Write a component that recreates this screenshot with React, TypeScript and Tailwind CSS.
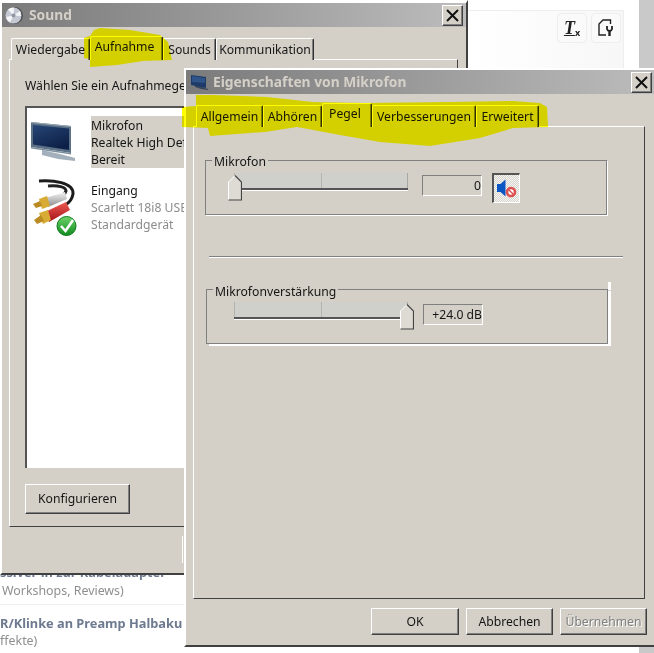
import type { ReactNode } from "react";

const raised = "border-t border-l border-t-white border-l-white border-r border-b border-r-[#404040] border-b-[#404040]";

function CloseButton() {
  return (
    <button type="button" className={`flex h-[21px] w-[21px] items-center justify-center bg-[#d4d0c8] shadow-[inset_-1px_-1px_0_#808080] ${raised}`}>
      <svg width="13" height="13" viewBox="0 0 13 13" fill="none" stroke="#111" strokeWidth="2">
        <path d="M1 1l11 11M12 1L1 12" />
      </svg>
    </button>
  );
}

function TitleBar({ title, icon, padRight }: { title: string; icon: ReactNode; padRight: string }) {
  return (
    <div className={`flex h-6 items-center bg-gradient-to-r from-[#7b7b7b] to-[#bcbcbc] pl-[3px] ${padRight}`}>
      <div className="flex w-[23px] shrink-0 items-center">{icon}</div>
      <span className="ml-[1px] text-[13.8px] font-bold text-[#d4d0c8]">{title}</span>
      <div className="ml-auto">
        <CloseButton />
      </div>
    </div>
  );
}

function Tab({ label, width, active }: { label: string; width: string; active?: boolean }) {
  return (
    <div
      className={`flex shrink-0 items-center justify-center rounded-t-[2px] border-t border-l border-t-white border-l-white border-r border-r-[#303030] bg-[#d4d0c8] shadow-[inset_-1px_0_0_#808080] ${width} ${
        active ? "relative z-10 h-[24px] pb-[3px] pr-[4px]" : "h-[22px] pt-[2px]"
      }`}
    >
      {label}
    </div>
  );
}

function SoundIcon() {
  return (
    <svg width="19" height="19" viewBox="0 0 19 19">
      <circle cx="9.5" cy="9.5" r="8.5" fill="#4d4f52" />
      <circle cx="8.5" cy="9.5" r="8" fill="#c3c8d2" />
      <path d="M8.5 9.5L3 3.5A8 8 0 0 1 9 1.5ZM8.5 9.5L1 11A8 8 0 0 0 5 16.5ZM8.5 9.5L15 5A8 8 0 0 1 16 10Z" fill="#f4f5f7" />
      <circle cx="8.5" cy="9.5" r="2" fill="#8f95a0" />
    </svg>
  );
}

function MonitorIcon() {
  return (
    <svg className="ml-[3px]" width="46" height="42" viewBox="0 0 46 42">
      <defs>
        <linearGradient id="screen" x1="0" y1="0" x2="0.6" y2="1">
          <stop offset="0" stopColor="#264676" />
          <stop offset="1" stopColor="#0d2047" />
        </linearGradient>
      </defs>
      <path d="M12 29L30 33L45 37V40L28 38L12 34Z" fill="#a3b0bc" />
      <path d="M1 1L41 5V32L1 26Z" fill="#5d7186" />
      <path d="M1 1L41 5V6L1 2Z" fill="#97a7b5" />
      <path d="M3 4L39 7.5V29L3 23.5Z" fill="url(#screen)" />
      <path d="M1 26L41 32V33.5L1 27.5Z" fill="#7d8e9e" />
    </svg>
  );
}

function TitleMonitorIcon() {
  return (
    <svg className="ml-[2px]" width="17" height="15" viewBox="0 0 17 15">
      <path d="M4 10L11 12L17 14V15L10 14L4 12Z" fill="#39485a" />
      <path d="M0 0L15 2V13L0 10Z" fill="#1d3a68" />
      <path d="M1 1L14 3V8L1 7Z" fill="#2e5488" />
    </svg>
  );
}

function CableIcon() {
  return (
    <svg className="ml-[1px]" width="60" height="65" viewBox="0 0 60 65">
      <defs>
        <linearGradient id="silver" x1="0" y1="0" x2="0" y2="1">
          <stop offset="0" stopColor="#f6f6f6" />
          <stop offset="1" stopColor="#8a8a8a" />
        </linearGradient>
        <linearGradient id="red" x1="0" y1="0" x2="0" y2="1">
          <stop offset="0" stopColor="#ef5a50" />
          <stop offset="1" stopColor="#a3121a" />
        </linearGradient>
        <linearGradient id="tick" x1="0" y1="0" x2="0" y2="1">
          <stop offset="0" stopColor="#6fd46a" />
          <stop offset="1" stopColor="#0f8a1e" />
        </linearGradient>
      </defs>
      <path d="M11 7C24 6 46 8 45 20C44 26 41 29 37 31" fill="none" stroke="#1c1c1c" strokeWidth="3" />
      <path d="M20 12C30 11 38 13 38 17C37 20 36 21 33 22" fill="none" stroke="#222" strokeWidth="3" />
      <path d="M17 24L37 18L39 25L20 33Z" fill="url(#silver)" />
      <path d="M17 38L38 28L42 36L21 48Z" fill="url(#red)" />
      <path d="M11 25L19 22L22 32L14 35Z" fill="#d8ab35" />
      <path d="M5 30L12 27L14 32L8 34Z" fill="#b98b22" />
      <path d="M11 39L20 36L23 46L15 50Z" fill="#d8ab35" />
      <path d="M6 46L13 41L16 47L9 50Z" fill="#b98b22" />
      <circle cx="38.5" cy="52" r="9.5" fill="url(#tick)" stroke="#0f7a1c" />
      <path d="M33 52L37.5 57L45 46" fill="none" stroke="#fff" strokeWidth="2.6" />
    </svg>
  );
}

function DeviceRow({ icon, lines, selected }: { icon: ReactNode; lines: string[]; selected?: boolean }) {
  return (
    <div className="flex h-[51px] items-start">
      <div className="flex h-[51px] w-[64px] shrink-0 items-center">{icon}</div>
      <div className={`flex-1 whitespace-nowrap pt-[1px] leading-[17px] ${selected ? "bg-[#d4d0c8]" : ""}`}>
        {lines.map((line, i) => (
          <div key={line} className={!selected && i > 0 ? "text-[#8c8c8c]" : ""}>
            {line}
          </div>
        ))}
      </div>
    </div>
  );
}

function SoundWindow() {
  return (
    <div className="absolute left-0 top-0 h-[575px] w-[468px] border-t-[3px] border-l-2 border-r-2 border-b-2 border-t-white border-l-white border-r-[#404040] border-b-[#404040] bg-[#d4d0c8]">
      <TitleBar title="Sound" icon={<SoundIcon />} padRight="pr-[3px]" />
      <div className="flex pl-[9px] pt-[11px]">
        <Tab label="Wiedergabe" width="w-[79px]" />
        <div className="relative -mt-[2px] self-end">
          <Tab label="Aufnahme" width="w-[73px]" active />
        </div>
        <Tab label="Sounds" width="w-[53px]" />
        <Tab label="Kommunikation" width="w-[98px]" />
      </div>
      <div className={`ml-[7px] -mt-px h-[468px] w-[449px] bg-[#d4d0c8] pl-[15px] ${raised}`}>
        <div className="mt-[17px] h-[17px] whitespace-nowrap leading-[17px]">Wählen Sie ein Aufnahmegerät aus</div>
        <div className="mt-[12px] h-[362px] w-[416px] border-t-2 border-l-2 border-t-[#555] border-l-[#555] bg-white pt-[8px]">
          <DeviceRow selected icon={<MonitorIcon />} lines={["Mikrofon", "Realtek High Definition Audio", "Bereit"]} />
          <div className="mt-[14px]">
            <DeviceRow icon={<CableIcon />} lines={["Eingang", "Scarlett 18i8 USB", "Standardgerät"]} />
          </div>
        </div>
        <button type="button" className={`mt-[16px] h-[30px] w-[105px] bg-[#d4d0c8] pt-[1px] shadow-[inset_-1px_-1px_0_#808080] ${raised}`}>
          Konfigurieren
        </button>
      </div>
      <div className="ml-[180px] mt-[9px] h-[27px] w-[2px] border-l border-l-white" />
    </div>
  );
}

function Thumb({ position }: { position: string }) {
  return (
    <svg className={`absolute ${position}`} width="14" height="26" viewBox="0 0 14 26">
      <path d="M0.5 25V7L7 0.5L13.5 7V25Z" fill="#dedbd4" />
      <path d="M0.5 25V7L7 0.5" fill="none" stroke="#fff" />
      <path d="M7 0.5L13.5 7V25H0.5" fill="none" stroke="#444" strokeWidth="1.2" />
    </svg>
  );
}

function Slider({ thumbAtEnd }: { thumbAtEnd?: boolean }) {
  return (
    <div className="relative h-[30px] w-[186px] shrink-0">
      <div className="absolute left-[6px] top-0 flex h-[15px] w-[174px] bg-[#cfcfcb]">
        <div className="h-full w-px bg-[#b5b3ad]" />
        <div className="ml-[86px] h-full w-px bg-[#b5b3ad]" />
        <div className="ml-auto h-full w-px bg-[#a8a6a0]" />
      </div>
      <div className="absolute left-[6px] top-[15px] h-[3px] w-[174px] border-t-2 border-b border-t-[#555] border-b-white" />
      <Thumb position={thumbAtEnd ? "right-0 top-[2px]" : "left-0 top-[2px]"} />
    </div>
  );
}

function ValueBox({ value, margin }: { value: string; margin: string }) {
  return (
    <div className={`${margin} mt-[2px] flex h-[21px] w-[60px] shrink-0 items-center justify-end border-t border-l border-t-[#808080] border-l-[#808080] border-r border-b border-r-white border-b-white pt-[2px]`}>
      {value}
    </div>
  );
}

function MuteButton() {
  return (
    <div className="ml-[10px] flex h-[30px] w-[28px] shrink-0 items-center justify-center border-t-2 border-l-2 border-t-[#555] border-l-[#555] border-r border-b border-r-white border-b-white bg-[repeating-conic-gradient(#f6f5f2_0_25%,#d6d4ce_0_50%)] bg-[length:2px_2px]">
      <svg width="22" height="20" viewBox="0 0 22 20">
        <path d="M1 5h3.5l5-4.5v17l-5-4.5H1z" fill="#0a55c4" />
        <circle cx="15" cy="13" r="4" fill="#fff" stroke="#dd5150" strokeWidth="2.6" />
        <path d="M12.5 10.5l5 5" stroke="#dd5150" strokeWidth="1.4" />
      </svg>
    </div>
  );
}

function LevelsPanel() {
  return (
    <div className={`ml-[7px] -mt-px h-[473px] w-[452px] bg-[#d4d0c8] ${raised}`}>
      <div className="relative ml-[11px] mt-[33px] flex h-[55px] w-[402px] items-start border border-[#808080] pl-[22px] pt-[12px] shadow-[1px_1px_0_#fff]">
        <span className="absolute -top-[8px] left-[6px] bg-[#d4d0c8] px-[2px] leading-[17px]">Mikrofon</span>
        <Slider />
        <ValueBox value="0" margin="ml-[8px]" />
        <MuteButton />
      </div>
      <div className="ml-[15px] mt-[41px] h-[2px] w-[414px] border-t border-b border-t-[#808080] border-b-white" />
      <div className="relative ml-[12px] mt-[31px] flex h-[55px] w-[402px] items-start border border-[#808080] pl-[21px] pt-[12px] shadow-[3px_2px_0_#fff]">
        <div className="absolute -right-[4px] -top-[8px] h-[8px] w-[3px] bg-white" />
        <span className="absolute -top-[7px] left-[6px] bg-[#d4d0c8] px-[2px] leading-[17px]">Mikrofonverstärkung</span>
        <Slider thumbAtEnd />
        <ValueBox value="+24.0 dB" margin="ml-[9px]" />
      </div>
    </div>
  );
}

function DialogButton({ label, width, disabled }: { label: string; width: string; disabled?: boolean }) {
  return (
    <button
      type="button"
      className={`h-[27px] bg-[#d4d0c8] pt-[1px] shadow-[inset_-1px_-1px_0_#808080] ${width} ${raised} ${disabled ? "text-[#808080] [text-shadow:1px_1px_0_#fff]" : ""}`}
    >
      {label}
    </button>
  );
}

function MicDialog() {
  return (
    <div className="absolute left-[184px] top-[68px] h-[579px] w-[470px] border-t-2 border-l-2 border-b-2 border-t-white border-l-white border-b-[#404040] bg-[#d4d0c8]">
      <TitleBar title="Eigenschaften von Mikrofon" icon={<TitleMonitorIcon />} padRight="pr-[2px]" />
      <div className="flex pl-[10px] pt-[9px]">
        <div className="flex items-end">
          <Tab label="Allgemein" width="w-[67px]" />
          <Tab label="Abhören" width="w-[59px]" />
          <Tab label="Pegel" width="w-[50px]" active />
          <Tab label="Verbesserungen" width="w-[104px]" />
          <Tab label="Erweitert" width="w-[63px]" />
        </div>
      </div>
      <LevelsPanel />
      <div className="mt-[9px] flex justify-end gap-[7px] pr-[7px]">
        <DialogButton label="OK" width="w-[88px]" />
        <DialogButton label="Abbrechen" width="w-[87px]" />
        <DialogButton label="Übernehmen" width="w-[87px]" disabled />
      </div>
    </div>
  );
}

function ToolButton({ children }: { children: ReactNode }) {
  return (
    <div className="flex h-[30px] w-[30px] items-center justify-center rounded-[4px] border border-[#eeeeee] bg-[#fafafa]">{children}</div>
  );
}

function PageBehind() {
  return (
    <>
      <div className="absolute left-[467px] top-[10px] flex h-[60px] w-[157px] justify-end gap-[4px] border border-[#eeeeee] bg-gradient-to-r from-white to-[#f7f7f7] pr-[2px] pt-[2px]">
        <ToolButton>
          <span className="font-['Liberation_Serif',serif] text-[18px] font-bold italic leading-none text-[#222] underline">T</span>
          <span className="mt-[8px] text-[9px] font-bold leading-none text-[#222]">x</span>
        </ToolButton>
        <ToolButton>
          <svg width="16" height="18" viewBox="0 0 16 18" fill="none" stroke="#222" strokeWidth="1.4">
            <path d="M8 16H1V5l4-4h7.5v4" />
            <path d="M9 7v3a2.6 2.6 0 0 0 5 0V7" strokeWidth="1.8" />
            <path d="M11.5 12v5" strokeWidth="2.4" />
          </svg>
        </ToolButton>
      </div>
      <div className="absolute right-0 top-0 h-full w-[15px] bg-[#c9c9c9]" />
      <div className="absolute left-0 top-[564px] w-[184px] overflow-hidden whitespace-nowrap">
        <div className="h-[41px] border-b border-b-[#eeeeee]">
          <div className="text-[12.8px] font-bold leading-[17px] text-[#6d7a90]">ssiver in zur Kabeladapter</div>
          <div className="pl-[2px] pt-[1px] text-[12.4px] leading-[18px] text-[#8f8f8f]">Workshops, Reviews)</div>
        </div>
        <div className="mt-[10px] text-[12.8px] font-bold leading-[17px] text-[#6d7a90]">R/Klinke an Preamp Halbaku</div>
        <div className="text-[12.4px] leading-[18px] text-[#8f8f8f]">ffekte)</div>
      </div>
    </>
  );
}

function Highlights() {
  return (
    <svg className="pointer-events-none absolute left-0 top-0 z-20 mix-blend-multiply" width="654" height="653" viewBox="0 0 654 653">
      <path d="M84 38L90 36L94 30L100 28L130 30L160 35L168 42L172 60L143 61L117 65L90 67L90 59L84 58Z" fill="#ffff00" />
      <path d="M182 107L196 106L196 95L213 95L267 97L313 102L363 103L447 102L513 101L540 103L547 107L548 127L513 128L480 138L430 146L380 142L340 135L297 127L265 132L250 133L210 136L208 128L182 127Z" fill="#ffff00" />
    </svg>
  );
}

export default function App() {
  return (
    <div className="relative h-[653px] w-[654px] overflow-hidden bg-white font-['Noto_Sans',sans-serif] text-[12.2px] text-[#151515]">
      <PageBehind />
      <SoundWindow />
      <MicDialog />
      <Highlights />
    </div>
  );
}
